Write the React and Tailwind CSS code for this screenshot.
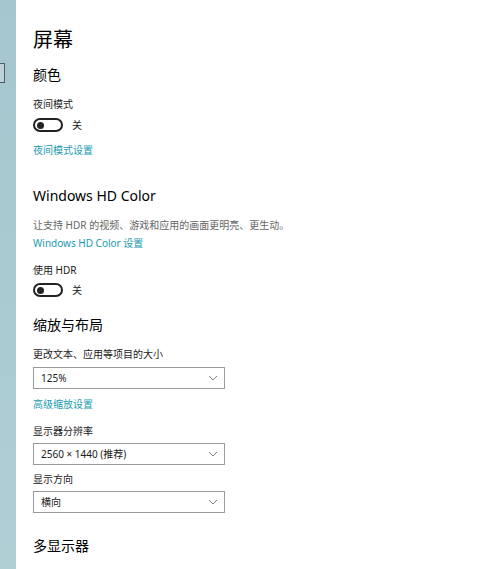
import React from "react";

const font = { fontFamily: '"Noto Sans", "Noto Sans CJK SC", sans-serif' };

function Toggle({ className = "" }) {
  return (
    <div className={`flex items-center h-[14px] ${className}`}>
      <div className="w-[30px] h-[14px] rounded-full border-2 border-[#222] flex items-center pl-[2px] box-border">
        <div className="w-[7px] h-[7px] rounded-full bg-[#222]" />
      </div>
      <span className="ml-[9px] text-[10px] leading-[14px] text-[#222]">关</span>
    </div>
  );
}

function Select({ value, className = "" }) {
  return (
    <div
      className={`w-[192px] h-[22px] border-[1.5px] border-[#9a9a9a] bg-white flex items-center justify-between pl-[7px] pr-[6px] box-border ${className}`}
    >
      <span className="text-[10px] leading-[14px] text-[#1a1a1a]">{value}</span>
      <svg width="10" height="6" viewBox="0 0 10 6" fill="none">
        <path d="M1 1 L5 5 L9 1" stroke="#808080" strokeWidth="1" />
      </svg>
    </div>
  );
}

export default function App() {
  return (
    <div className="flex w-[500px] h-[569px] bg-white overflow-hidden" style={font}>
      <div className="w-[16px] h-full bg-gradient-to-b from-[#a6c6cf] to-[#afcfd5] flex flex-col">
        <div className="mt-[63px] w-[5px] h-[20px] border-[1.5px] border-l-0 border-[#4d5c61] bg-[#bcd3d9]" />
      </div>
      <div className="flex-1 pl-[17px] pt-[24px] flex flex-col text-[#1a1a1a]">
        <div className="text-[20px] leading-[32px] text-black">屏幕</div>
        <div className="mt-[7px] text-[14px] leading-[24px] text-black">颜色</div>
        <div className="mt-[9px] text-[10px] leading-[16px]">夜间模式</div>
        <Toggle className="mt-[6px]" />
        <div className="mt-[10px] text-[10px] leading-[16px] text-[#1a9bb3]">夜间模式设置</div>

        <div className="mt-[27px] text-[14px] leading-[22px] text-black">Windows HD Color</div>
        <div className="mt-[10px] text-[10px] leading-[16px] text-[#666]">
          让支持 HDR 的视频、游戏和应用的画面更明亮、更生动。
        </div>
        <div className="mt-[2px] text-[10px] leading-[16px] text-[#1a9bb3]">Windows HD Color 设置</div>
        <div className="mt-[11px] text-[10px] leading-[16px]">使用 HDR</div>
        <Toggle className="mt-[5px]" />

        <div className="mt-[17px] text-[14px] leading-[22px] text-black">缩放与布局</div>
        <div className="mt-[10px] text-[10px] leading-[16px]">更改文本、应用等项目的大小</div>
        <Select value="125%" className="mt-[5px]" />
        <div className="mt-[7px] text-[10px] leading-[16px] text-[#1a9bb3]">高级缩放设置</div>
        <div className="mt-[11px] text-[10px] leading-[16px]">显示器分辨率</div>
        <Select value="2560 × 1440 (推荐)" className="mt-[4px]" />
        <div className="mt-[6px] text-[10px] leading-[16px]">显示方向</div>
        <Select value="横向" className="mt-[4px]" />

        <div className="mt-[21px] text-[14px] leading-[24px] text-black">多显示器</div>
      </div>
    </div>
  );
}
